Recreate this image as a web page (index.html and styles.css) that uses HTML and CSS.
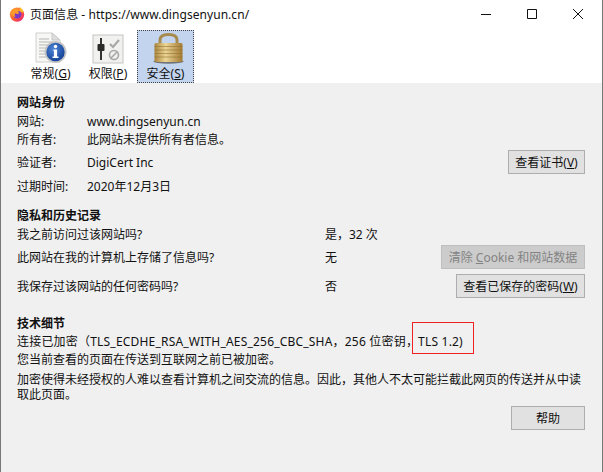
FILE: index.html
```html
<!DOCTYPE html>
<html>
<head>
<meta charset="utf-8">
<title>页面信息</title>
<link rel="stylesheet" href="styles.css">
</head>
<body>
<div class="window">

  <div class="titlebar">
    <svg class="logo" width="16" height="16" viewBox="0 0 16 16">
      <defs>
        <linearGradient id="fx" x1="0" y1="0" x2="1" y2="1">
          <stop offset="0" stop-color="#ffb52e"/>
          <stop offset="0.55" stop-color="#ff5a36"/>
          <stop offset="1" stop-color="#e31587"/>
        </linearGradient>
      </defs>
      <circle cx="8" cy="8.6" r="7.2" fill="url(#fx)"/>
      <path d="M10.5 0.6c1.6 1.6 3.6 3 4.4 6L11 6z" fill="#ffbd2e"/>
      <circle cx="8.2" cy="8.2" r="4.2" fill="#7b3bc4"/>
      <path d="M2 6c1.5-2.4 4-3.4 6.4-3 2 .4 3.8 1.8 4.4 3.6-1.2-1.2-2.6-1.6-4-1.4 1.2 1 1.2 2 .8 2.6-1 .6-2.6 0-3.4-.6-.8.8-.8 2.6.6 3.6-2.6 0-4.8-2.2-4.8-4.8z" fill="#ff9a2a"/>
    </svg>
    <span class="title">页面信息 - https://www.dingsenyun.cn/</span>
    <div class="controls">
      <svg width="12" height="12" viewBox="0 0 12 12"><path d="M1 6.500h10" stroke="#111" fill="none"/></svg>
      <svg width="12" height="12" viewBox="0 0 12 12"><path d="M1.500 1.500h9v9h-9z" stroke="#111" fill="none"/></svg>
      <svg width="12" height="12" viewBox="0 0 12 12"><path d="M1 1l10 10M11 1L1 11" stroke="#111" fill="none"/></svg>
    </div>
  </div>

  <div class="tabs">
    <div class="tab tab-general">
      <svg width="34" height="34" viewBox="0 0 34 34">
        <defs>
          <radialGradient id="blue" cx="0.4" cy="0.35" r="0.7">
            <stop offset="0" stop-color="#4f86d8"/>
            <stop offset="1" stop-color="#123f94"/>
          </radialGradient>
        </defs>
        <path d="M2 3h16l8 7v22H2z" fill="#f7f7f5" stroke="#cfcfcb"/>
        <path d="M18 3v7h8z" fill="#dedede" stroke="#c8c8c8"/>
        <path d="M5 9h10M5 12h14M5 15h14M5 18h10M5 21h9M5 24h9M5 27h10" stroke="#b5b5b0"/>
        <circle cx="21.500" cy="22" r="11" fill="#c4c4c4"/>
        <circle cx="21.500" cy="22" r="9.200" fill="url(#blue)"/>
        <circle cx="21.500" cy="16.500" r="1.700" fill="#fff"/>
        <path d="M19.500 19.500h3.600v7h1.400v1.500h-6v-1.500h1.400v-5.500h-.4z" fill="#fff"/>
      </svg>
      <span>常规(<u>G</u>)</span>
    </div>
    <div class="tab tab-perms">
      <svg width="32" height="30" viewBox="0 0 32 30">
        <rect x="1" y="1" width="30" height="28" fill="#f1f1ef" stroke="#c4c4c2"/>
        <path d="M9 4v22" stroke="#333" stroke-width="2"/>
        <rect x="5.500" y="10" width="7" height="7" rx="1" fill="#2a2a2a"/>
        <path d="M18 10l3 3 6-7" stroke="#a8a8a8" stroke-width="2.200" fill="none"/>
        <circle cx="22" cy="21" r="4.500" fill="none" stroke="#a8a8a8" stroke-width="1.600"/>
        <path d="M19 24l6-6" stroke="#a8a8a8" stroke-width="1.600"/>
      </svg>
      <span>权限(<u>P</u>)</span>
    </div>
    <div class="tab tab-security">
      <svg width="36" height="34" viewBox="0 0 36 34">
        <defs>
          <linearGradient id="gold" x1="0" y1="0" x2="1" y2="0">
            <stop offset="0" stop-color="#a9853d"/>
            <stop offset="0.4" stop-color="#ecd596"/>
            <stop offset="1" stop-color="#a27a32"/>
          </linearGradient>
        </defs>
        <ellipse cx="20.500" cy="31.500" rx="15" ry="2.200" fill="#4a4a48" opacity="0.7"/>
        <path d="M12 15V10C12 6 15.500 4.500 20.500 4.500S29 6 29 10V15" fill="none" stroke="#a78a4e" stroke-width="3"/>
        <rect x="6.500" y="13" width="28" height="19" rx="1.500" fill="url(#gold)"/>
        <path d="M6.500 16.500h28M6.500 20h28M6.500 23.500h28M6.500 27h28" stroke="#8f6f2e" stroke-width="0.800" opacity="0.700"/>
      </svg>
      <span>安全(<u>S</u>)</span>
    </div>
  </div>

  <div class="content">
    <section class="group identity">
      <h3>网站身份</h3>
      <div class="info-row"><span class="key">网站:</span><span>www.dingsenyun.cn</span></div>
      <div class="info-row"><span class="key">所有者:</span><span>此网站未提供所有者信息。</span></div>
      <div class="info-row verifier">
        <span class="key">验证者:</span><span>DigiCert Inc</span>
        <button class="btn">查看证书(<u>V</u>)</button>
      </div>
      <div class="info-row expires"><span class="key">过期时间:</span><span>2020年12月3日</span></div>
    </section>

    <section class="group privacy">
      <h3>隐私和历史记录</h3>
      <div class="q-row"><span>我之前访问过该网站吗?</span><span>是，32 次</span></div>
      <div class="q-row q-clear">
        <span>此网站在我的计算机上存储了信息吗?</span><span>无</span>
        <button class="btn" disabled>清除 <u>C</u>ookie 和网站数据</button>
      </div>
      <div class="q-row q-saved">
        <span>我保存过该网站的任何密码吗?</span><span>否</span>
        <button class="btn">查看已保存的密码(<u>W</u>)</button>
      </div>
    </section>

    <section class="group tech">
      <h3>技术细节</h3>
      <p class="cipher">连接已加密（TLS_ECDHE_RSA_WITH_AES_256_CBC_SHA，256 位密钥，<span class="marked">TLS 1.2)</span></p>
      <p>您当前查看的页面在传送到互联网之前已被加密。</p>
      <p class="long">加密使得未经授权的人难以查看计算机之间交流的信息。因此，其他人不太可能拦截此网页的传送并从中读取此页面。</p>
    </section>

    <div class="footer">
      <button class="btn btn-help">帮助</button>
    </div>
  </div>

</div>
</body>
</html>
```

FILE: styles.css
```css
html, body {
    margin: 0;
    padding: 0;
}

body {
    width: 603px;
    height: 472px;
    overflow: hidden;
    font-family: "Noto Sans", "Noto Sans CJK SC", sans-serif;
    font-size: 12px;
    color: #111;
}

.window {
    box-sizing: border-box;
    width: 603px;
    height: 472px;
    background-color: #f0f0f0;
    border-left: 1px solid #777;
    border-right: 1px solid #777;
}

.titlebar {
    display: flex;
    align-items: center;
    box-sizing: border-box;
    height: 30px;
    background-color: #fff;
    padding-left: 8px;
    padding-bottom: 2px;
}

.logo {
    margin-right: 5px;
}

.title {
    font-size: 12px;
    letter-spacing: 0.05px;
}

.controls {
    display: flex;
    gap: 34px;
    margin-left: auto;
    margin-right: 18px;
}

.tabs {
    display: flex;
    align-items: flex-end;
    height: 53px;
    background-color: #fff;
    padding-left: 27px;
}

.tab {
    display: flex;
    flex-direction: column;
    align-items: center;
    justify-content: flex-end;
    box-sizing: border-box;
    height: 53px;
    padding-bottom: 1px;
    line-height: 17px;
}

.tab svg {
    margin-bottom: 1px;
}

.tab-general { width: 45px; }
.tab-perms { width: 40px; margin-left: 15px; }

.tab-security {
    width: 57px;
    margin-left: 9px;
    background-color: #c3d4ee;
    outline: 1px dotted #444;
    outline-offset: -1px;
}

.content {
    padding: 11px 17px 0 16px;
}

.group h3 {
    margin: 0;
    font-size: 12px;
    line-height: 18px;
    font-weight: bold;
}

.info-row {
    display: grid;
    grid-template-columns: 70px 1fr auto;
    align-items: center;
    height: 18px;
}

.verifier {
    height: 23px;
    margin-top: 2px;
}

.expires {
    height: 18px;
    margin-top: 4px;
}

.q-row {
    display: grid;
    grid-template-columns: 308px 1fr auto;
    align-items: center;
    height: 18px;
}

.q-clear {
    height: 24px;
    margin-top: 2px;
}

.q-saved {
    height: 23px;
    margin-top: 5px;
}

.btn {
    box-sizing: border-box;
    height: 24px;
    padding: 0 4px;
    font-family: inherit;
    font-size: 12px;
    color: #111;
    background-color: #e1e1e1;
    border: 1px solid #adadad;
}

.verifier .btn { width: 77px; }
.q-clear .btn { width: 144px; }
.q-saved .btn { width: 129px; }

.btn:disabled {
    color: #838383;
    background-color: #cccccc;
    border-color: #bfbfbf;
}

.privacy {
    margin-top: 12px;
}

.tech {
    margin-top: 18px;
}

.tech p {
    margin: 0;
    line-height: 18px;
}

.tech .cipher {
    letter-spacing: 0.2px;
}

.tech .long {
    margin-top: 3px;
    line-height: 15px;
}

.marked {
    position: relative;
}

/* red box drawn over the screenshot */
.marked::after {
    content: "";
    position: absolute;
    left: -5px;
    top: -10px;
    width: 60px;
    height: 30px;
    outline: 1px solid #f02020;
}

.footer {
    display: flex;
    justify-content: flex-end;
    margin-top: 4px;
}

.btn-help {
    width: 74px;
}
```
